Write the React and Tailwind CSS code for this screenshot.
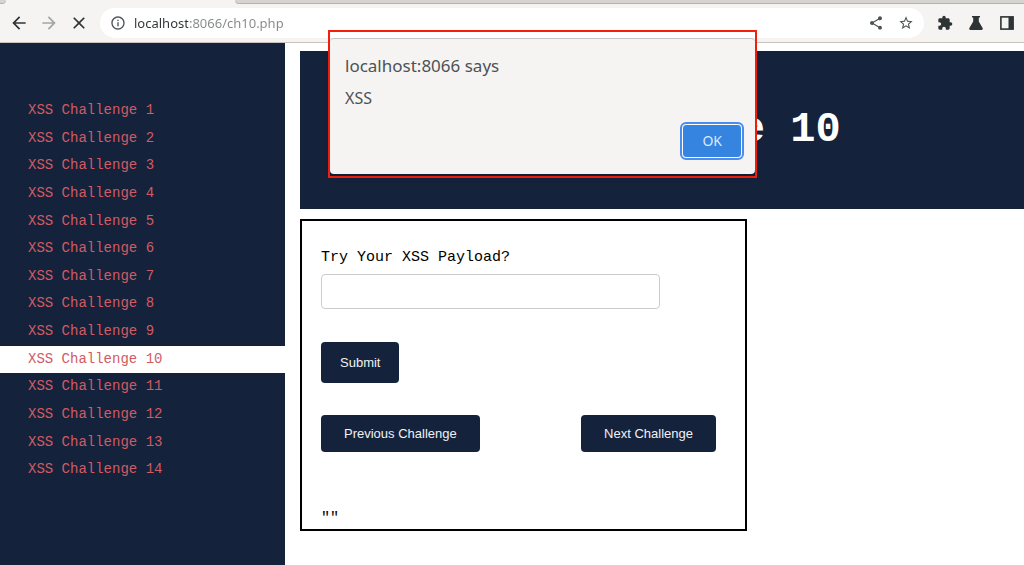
import React from 'react';
import {
  MdArrowBack,
  MdArrowForward,
  MdClose,
  MdExtension,
  MdInfoOutline,
  MdShare,
  MdStarBorder,
} from 'react-icons/md';

const challenges = Array.from({ length: 14 }, (_, i) => i + 1);
const current = 10;

function FlaskIcon() {
  return (
    <svg width="14" height="14" viewBox="0 0 14 14" fill="currentColor" aria-hidden="true">
      <path d="M3 0h8v1.6H9.8v4L13.6 12c.5.9.1 2-1 2H1.4c-1.100 0-1.500-1.100-1-2L4.200 5.600v-4H3z" />
    </svg>
  );
}

function SidePanelIcon() {
  return (
    <svg width="14" height="14" viewBox="0 0 14 14" aria-hidden="true">
      <rect x="0.900" y="0.900" width="12.200" height="12.200" fill="none" stroke="currentColor" strokeWidth="1.600" />
      <rect x="8.500" y="0.900" width="4.600" height="12.200" fill="currentColor" />
    </svg>
  );
}

function IconButton({ label, className = '', children }) {
  return (
    <button type="button" aria-label={label} className={`flex size-5 shrink-0 items-center justify-center ${className}`}>
      {children}
    </button>
  );
}

function BrowserBar() {
  return (
    <header className="border-b border-[#c9c3bb] bg-[#f5f4f2]">
      <div className="flex h-1 justify-between">
        <div className="w-[6px] rounded-br-full border-b border-[#b5b3ae] bg-[#d5d4cf]" />
        <div className="ml-[229px] grow rounded-bl-full border-b border-[#b5b3ae] bg-[#d5d4cf]" />
      </div>
      <div className="flex items-center pt-1 pb-1 pl-[9px] pr-[7px] text-[#2e3436]">
        <div className="mr-[11px] flex gap-[10px]">
          <IconButton label="Back"><MdArrowBack size={20} /></IconButton>
          <IconButton label="Forward" className="text-[#a3a5a5]"><MdArrowForward size={20} /></IconButton>
          <IconButton label="Stop loading"><MdClose size={20} /></IconButton>
        </div>
        <div className="mr-[11px] flex h-[30px] grow items-center gap-[10px] rounded-full bg-white pr-2 pl-2 text-[#4d5254]">
          <div className="flex grow items-center gap-[6px]">
            <IconButton label="View site information"><MdInfoOutline size={16} /></IconButton>
            <input
              aria-label="Address"
              defaultValue="localhost:8066/ch10.php"
              className="min-w-0 grow bg-[linear-gradient(90deg,#2e3436_54px,#858889_54px)] bg-clip-text font-['Noto_Sans',sans-serif] text-[13px] leading-5 text-transparent outline-none"
            />
          </div>
          <IconButton label="Share"><MdShare size={16} /></IconButton>
          <IconButton label="Bookmark"><MdStarBorder size={16} /></IconButton>
        </div>
        <div className="flex gap-[11px]">
          <IconButton label="Extensions"><MdExtension size={16} /></IconButton>
          <IconButton label="Labs"><FlaskIcon /></IconButton>
          <IconButton label="Side panel"><SidePanelIcon /></IconButton>
        </div>
      </div>
    </header>
  );
}

function Sidebar() {
  return (
    <nav aria-label="Challenges" className="w-[285px] shrink-0 bg-[#15223b] pt-[54px]">
      <ul className="grid h-[387px] auto-rows-fr text-sm text-[#d15b63]">
        {challenges.map((n) => (
          <li key={n} className={n === current ? 'bg-white' : ''}>
            <a href={`#ch${n}`} aria-current={n === current ? 'page' : undefined} className="block pt-[3px] pl-7 leading-5">
              XSS Challenge {n}
            </a>
          </li>
        ))}
      </ul>
    </nav>
  );
}

function ChallengeForm() {
  return (
    <form className="mt-[10px] w-[447px] max-w-full border-2 border-black pt-[27px] pr-[29px] pb-0 pl-[19px]" onSubmit={(e) => e.preventDefault()}>
      <label htmlFor="payload" className="block text-[15px] leading-5 text-black">
        Try Your XSS Payload?
      </label>
      <input id="payload" type="text" className="mt-[6px] block h-[35px] w-[339px] max-w-full rounded border border-[#cccccc] px-2" />
      <div className="font-['Liberation_Sans',Arial,sans-serif] text-[13px] leading-[17px] text-[#f0f1f3]">
        <button type="submit" className="mt-[33px] block rounded bg-[#15223b] px-[19px] py-3">Submit</button>
        <div className="mt-8 flex justify-between">
          <button type="button" className="rounded bg-[#15223b] px-[23px] py-[10px]">Previous Challenge</button>
          <button type="button" className="rounded bg-[#15223b] px-[23px] py-[10px]">Next Challenge</button>
        </div>
      </div>
      <p className="mt-[57px] text-[15px] leading-5 text-black">""</p>
    </form>
  );
}

function AlertDialog() {
  return (
    <div className="absolute top-[30px] left-[328px] w-[429px] border-2 border-[#f5200c] pt-[6px] pb-[2px]">
      <div role="alertdialog" aria-labelledby="alert-title" aria-describedby="alert-text" className="rounded border-t border-[#c4c5c5] bg-[#f5f4f3] px-[15px] pt-[15px] pb-4 font-['Noto_Sans',sans-serif] text-[#4d5254] shadow-md">
        <h2 id="alert-title" className="text-[17px] leading-6">localhost:8066 says</h2>
        <p id="alert-text" className="mt-2 text-base leading-6">XSS</p>
        <div className="mt-[14px] -mr-0.5 flex justify-end">
          <button type="button" className="rounded border border-white bg-[#3584e0] px-[19px] py-[5px] text-sm leading-[22px] text-[#dbe9fa] outline-2 outline-[#4a8df0]">OK</button>
        </div>
      </div>
    </div>
  );
}

export default function App() {
  return (
    <div className="relative flex min-h-screen flex-col bg-white font-['Liberation_Mono','Courier_New',monospace]">
      <BrowserBar />
      <div className="flex grow">
        <Sidebar />
        <main className="min-w-0 grow pt-2 pl-[15px]">
          <div className="bg-[#15223b] pt-[54px] pr-[46px] pb-[54px] text-center">
            <h1 className="text-[42px] leading-[50px] font-bold text-white">XSS Challenge 10</h1>
          </div>
          <ChallengeForm />
        </main>
      </div>
      <AlertDialog />
    </div>
  );
}
